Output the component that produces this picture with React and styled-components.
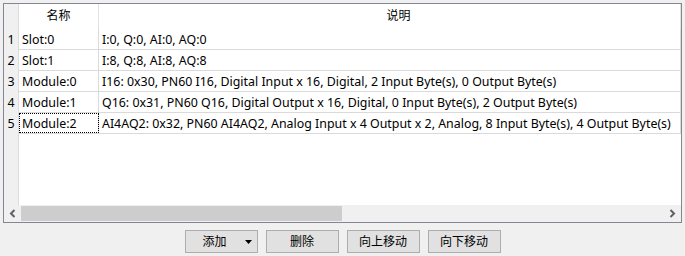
import React from "react";
import styled, { createGlobalStyle } from "styled-components";

const Global = createGlobalStyle`
  html, body { margin: 0; padding: 0; background: #f0f0f0; }
  body {
    font-family: "Noto Sans", "Noto Sans CJK SC", sans-serif;
    font-size: 12px;
    color: #000;
  }
`;

const Page = styled.div`
  width: 685px;
  height: 256px;
  padding: 3px 3px 0 3px;
  box-sizing: border-box;
  display: flex;
  flex-direction: column;
`;

const Frame = styled.div`
  border: 1px solid #828790;
  background: #fff;
  height: 220px;
  box-sizing: border-box;
  display: flex;
  flex-direction: column;
`;

const Content = styled.div`
  flex: 1;
  display: flex;
  min-height: 0;
`;

const Gutter = styled.div`
  width: 14px;
  border-right: 1px solid #dcdcdc;
  background: #f0f0f0;
  display: flex;
  flex-direction: column;
`;

const GutterHead = styled.div`
  height: 25px;
`;

const RowNum = styled.div`
  height: 21px;
  line-height: 21px;
  text-align: center;
  font-size: 12.4px;
`;

const DataArea = styled.div`
  flex: 1;
  overflow: hidden;
  display: flex;
  flex-direction: column;
`;

const HeaderRow = styled.div`
  display: grid;
  grid-template-columns: 80px 582px;
  height: 25px;
`;

const HeadCell = styled.div`
  border-right: 1px solid #e3e3e3;
  text-align: center;
  line-height: 24px;
  padding-left: ${(p) => p.$shift || 0}px;
  box-sizing: border-box;
  white-space: nowrap;
`;

const Row = styled.div`
  display: grid;
  grid-template-columns: 80px 582px;
  height: 21px;
  border-bottom: 1px solid #dadada;
  box-sizing: border-box;
`;

const Cell = styled.div`
  border-right: 1px solid #dadada;
  padding-left: 3px;
  padding-top: 1px;
  line-height: 19px;
  font-size: 12.4px;
  white-space: nowrap;
  overflow: hidden;
  box-sizing: border-box;
  outline: ${(p) => (p.$focus ? "1px dotted #000" : "none")};
  outline-offset: -1px;
`;

const ScrollBar = styled.div`
  height: 17px;
  background: #f0f0f0;
  display: flex;
  align-items: stretch;
`;

const ArrowBtn = styled.div`
  width: 17px;
  display: flex;
  align-items: center;
  justify-content: center;
`;

const Track = styled.div`
  flex: 1;
  padding: 1px 0;
  display: flex;
`;

const Thumb = styled.div`
  width: 321px;
  background: #cdcdcd;
`;

const Buttons = styled.div`
  display: flex;
  justify-content: center;
  gap: 8px;
  margin-top: 7px;
`;

const Button = styled.div`
  width: 73px;
  height: 23px;
  box-sizing: border-box;
  border: 1px solid #adadad;
  background: #e1e1e1;
  display: flex;
  align-items: center;
  justify-content: ${(p) => (p.$menu ? "flex-start" : "center")};
  padding: ${(p) => (p.$menu ? "0 5px 0 17px" : "0")};
  font-size: 12px;
  line-height: 1;
`;

const Caret = styled.svg`
  margin-left: auto;
`;

const rows = [
  ["Slot:0", "I:0, Q:0, AI:0, AQ:0"],
  ["Slot:1", "I:8, Q:8, AI:8, AQ:8"],
  ["Module:0", "I16: 0x30, PN60 I16, Digital Input x 16, Digital, 2 Input Byte(s), 0 Output Byte(s)"],
  ["Module:1", "Q16: 0x31, PN60 Q16, Digital Output x 16, Digital, 0 Input Byte(s), 2 Output Byte(s)"],
  ["Module:2", "AI4AQ2: 0x32, PN60 AI4AQ2, Analog Input x 4 Output x 2, Analog, 8 Input Byte(s), 4 Output Byte(s)"],
];

export default function App() {
  return (
    <>
      <Global />
      <Page>
        <Frame>
          <Content>
            <Gutter>
              <GutterHead />
              {rows.map((_, i) => (
                <RowNum key={i}>{i + 1}</RowNum>
              ))}
            </Gutter>
            <DataArea>
              <HeaderRow>
                <HeadCell>名称</HeadCell>
                <HeadCell $shift={18}>说明</HeadCell>
              </HeaderRow>
              {rows.map(([name, desc], i) => (
                <Row key={i}>
                  <Cell $focus={i === 4}>{name}</Cell>
                  <Cell>{desc}</Cell>
                </Row>
              ))}
            </DataArea>
          </Content>
          <ScrollBar>
            <ArrowBtn>
              <svg width="7" height="9" viewBox="0 0 7 9">
                <polyline points="5.5,1 2,4.5 5.5,8" fill="none" stroke="#606060" strokeWidth="2" />
              </svg>
            </ArrowBtn>
            <Track>
              <Thumb />
            </Track>
            <ArrowBtn>
              <svg width="7" height="9" viewBox="0 0 7 9">
                <polyline points="1.5,1 5,4.5 1.5,8" fill="none" stroke="#606060" strokeWidth="2" />
              </svg>
            </ArrowBtn>
          </ScrollBar>
        </Frame>
        <Buttons>
          <Button $menu>
            添加
            <Caret width="7" height="4" viewBox="0 0 7 4">
              <polygon points="0,0 7,0 3.5,4" fill="#000" />
            </Caret>
          </Button>
          <Button>删除</Button>
          <Button>向上移动</Button>
          <Button>向下移动</Button>
        </Buttons>
      </Page>
    </>
  );
}
